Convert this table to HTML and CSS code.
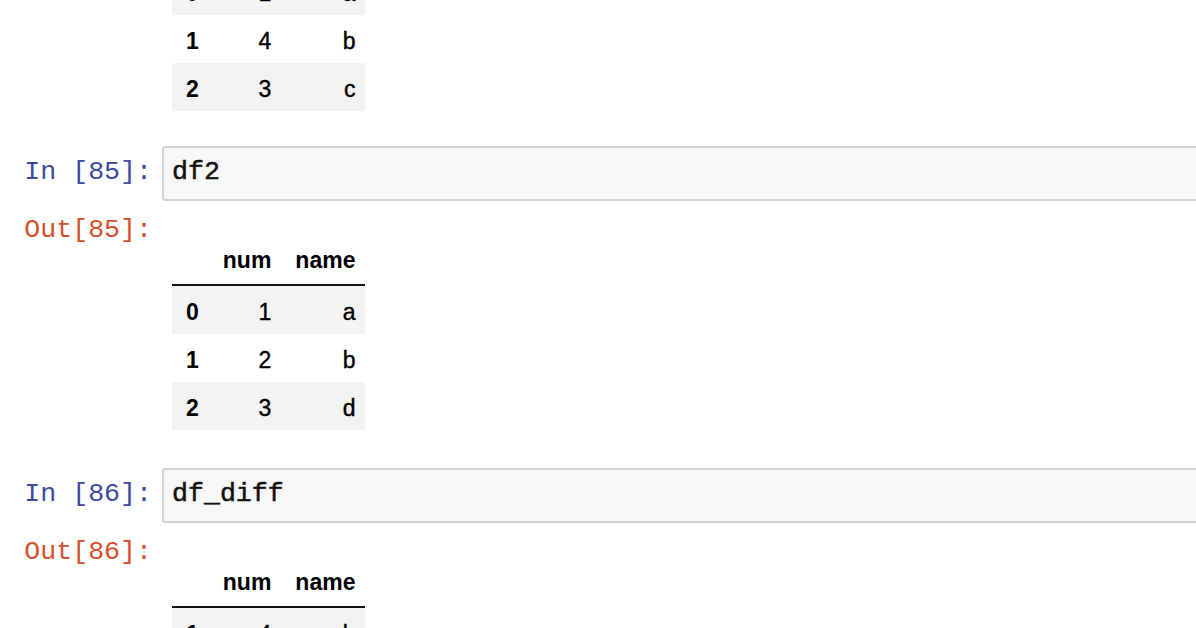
FILE: index.html
```html
<!DOCTYPE html>
<html>
<head>
<meta charset="utf-8">
<link rel="stylesheet" href="styles.css">
</head>
<body>
<div class="nb">
  <div class="cell cell-top">
    <div class="row out">
      <div class="prompt out-prompt">Out[84]:</div>
      <div class="subarea">
        <table class="df">
          <thead><tr><th></th><th>num</th><th>name</th></tr></thead>
          <tbody>
            <tr><th>0</th><td>1</td><td>a</td></tr>
            <tr><th>1</th><td>4</td><td>b</td></tr>
            <tr><th>2</th><td>3</td><td>c</td></tr>
          </tbody>
        </table>
      </div>
    </div>
  </div>

  <div class="cell">
    <div class="row in">
      <div class="prompt in-prompt">In&nbsp;[85]:</div>
      <div class="input"><span class="code">df2</span></div>
    </div>
    <div class="row out">
      <div class="prompt out-prompt">Out[85]:</div>
      <div class="subarea">
        <table class="df">
          <thead><tr><th></th><th>num</th><th>name</th></tr></thead>
          <tbody>
            <tr><th>0</th><td>1</td><td>a</td></tr>
            <tr><th>1</th><td>2</td><td>b</td></tr>
            <tr><th>2</th><td>3</td><td>d</td></tr>
          </tbody>
        </table>
      </div>
    </div>
  </div>

  <div class="cell">
    <div class="row in">
      <div class="prompt in-prompt">In&nbsp;[86]:</div>
      <div class="input"><span class="code">df_diff</span></div>
    </div>
    <div class="row out">
      <div class="prompt out-prompt">Out[86]:</div>
      <div class="subarea">
        <table class="df">
          <thead><tr><th></th><th>num</th><th>name</th></tr></thead>
          <tbody>
            <tr><th>1</th><td>4</td><td>b</td></tr>
            <tr><th>2</th><td>3</td><td>c</td></tr>
          </tbody>
        </table>
      </div>
    </div>
  </div>
</div>
</body>
</html>
```

FILE: styles.css
```css
html, body {
  margin: 0;
  padding: 0;
  background: #ffffff;
  overflow: hidden;
}

body {
  width: 1196px;
  height: 628px;
}

.nb {
  margin-top: -106px;
  display: flex;
  flex-direction: column;
  gap: 38px;
}

.cell {
  display: flex;
  flex-direction: column;
  gap: 12px;
}

.cell-top {
  margin-bottom: -3px;
}

.row {
  display: grid;
  grid-template-columns: 162px 1fr;
  align-items: start;
}

.prompt {
  font-family: "Liberation Mono", "DejaVu Sans Mono", monospace;
  font-size: 26.6px;
  line-height: 34px;
  text-align: right;
  padding-right: 10px;
  white-space: nowrap;
}

.in-prompt {
  color: #3b4a9e;
  padding-top: 9px;
}

.out-prompt {
  color: #d4502c;
}

.input {
  background: #f7f7f7;
  border: 2px solid #d2d2d2;
  border-right: 0;
  border-radius: 3px 0 0 3px;
  padding: 7px 0 8px 8px;
  line-height: 34px;
}

.code {
  font-family: "Liberation Mono", "DejaVu Sans Mono", monospace;
  font-size: 26.6px;
  color: #111;
  -webkit-text-stroke: 0.5px #111;
}

.subarea {
  padding-left: 10px;
  padding-top: 23px;
}

.df {
  border-collapse: collapse;
  border-spacing: 0;
  font-family: "Liberation Sans", Arial, sans-serif;
  font-size: 23px;
  line-height: 23px;
  color: #000;
}

.df th,
.df td {
  text-align: right;
  padding: 0 10px 0 14px;
  white-space: nowrap;
}

.df thead th {
  font-weight: bold;
  height: 48px;
  box-sizing: border-box;
  padding-top: 13px;
  padding-bottom: 12px;
  vertical-align: bottom;
  border-bottom: 2px solid #111;
}

.df tbody th,
.df tbody td {
  height: 48px;
  box-sizing: border-box;
  padding-top: 15px;
  padding-bottom: 10px;
  vertical-align: top;
}

.df tbody th {
  font-weight: bold;
}

.df tbody td {
  font-weight: normal;
  -webkit-text-stroke: 0.4px #000;
}

.df tbody tr:nth-child(odd) {
  background: #f3f3f3;
}
```
